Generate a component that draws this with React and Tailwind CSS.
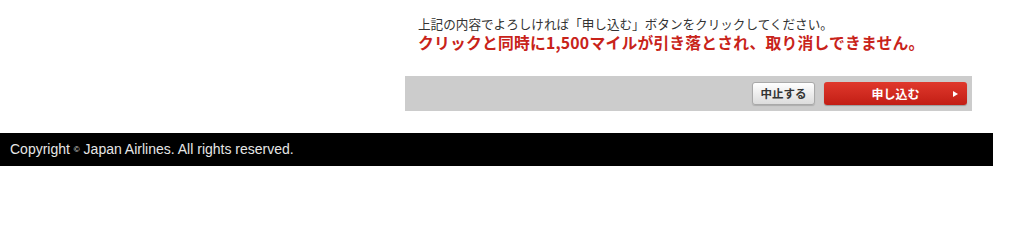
const jp = { fontFamily: '"Noto Sans CJK JP", "Noto Sans", sans-serif' };

export default function App() {
  return (
    <div className="w-[1024px] h-[235px] bg-white" style={jp}>
      {/* Notice + actions */}
      <div className="w-[993px] flex justify-end pt-[15px]">
        <div className="w-[567px] mr-[21px]">
          <div className="pl-[13px]">
            <p className="text-[12.6px] leading-[18px] text-[#333]">
              上記の内容でよろしければ「申し込む」ボタンをクリックしてください。
            </p>
            <p className="text-[15.8px] leading-[20px] font-bold text-[#c8231a] tracking-[0.2px]">
              クリックと同時に1,500マイルが引き落とされ、取り消しできません。
            </p>
          </div>
          <div className="mt-[23px] h-[35px] bg-[#cccccc] flex items-center justify-end gap-[9px] pr-[5px]">
            <button className="h-[23px] w-[63px] rounded-[3px] border border-[#a9a9a9] bg-gradient-to-b from-[#ffffff] to-[#dcdcdc] text-[11.5px] font-bold text-[#333] leading-none shadow-[0_1px_1px_rgba(0,0,0,0.15)]">
              中止する
            </button>
            <button className="relative h-[23px] w-[143px] rounded-[3px] bg-gradient-to-b from-[#e0382c] to-[#c21d14] text-[12px] font-bold text-white leading-none shadow-[0_1px_1px_rgba(0,0,0,0.25)]">
              申し込む
              <span className="absolute right-[9px] top-1/2 -translate-y-1/2 w-0 h-0 border-y-[3.5px] border-y-transparent border-l-[5px] border-l-white" />
            </button>
          </div>
        </div>
      </div>

      {/* Footer */}
      <div className="mt-[22px] w-[993px] h-[33px] bg-black flex items-center pl-[10px]">
        <p className="text-[14px] text-[#e6e6e6]" style={{ fontFamily: '"Liberation Sans", Arial, sans-serif' }}>
          Copyright <span className="text-[8px] align-middle">©</span> Japan Airlines. All rights reserved.
        </p>
      </div>
    </div>
  );
}
